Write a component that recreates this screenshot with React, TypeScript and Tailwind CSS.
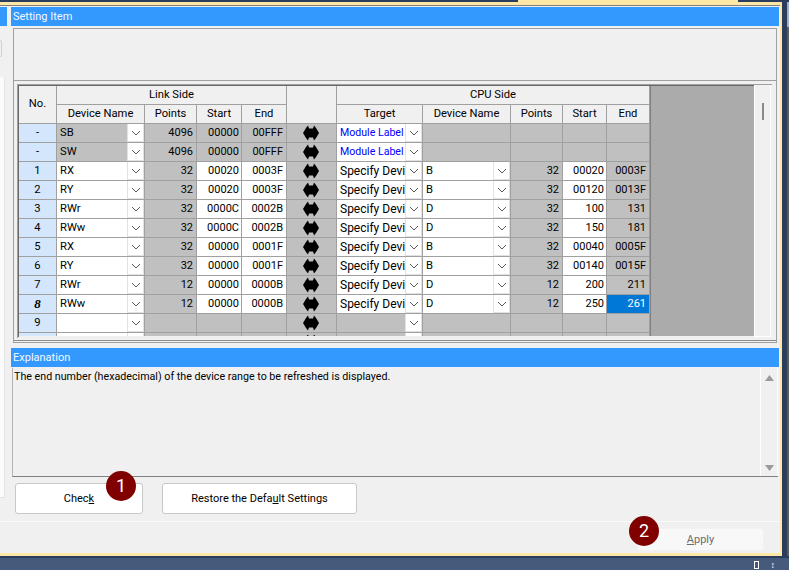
import type { ReactNode } from 'react'

type Row = {
  no: string
  name: string
  points: string
  start: string
  end: string
  target?: string
  device?: string
  cpuPoints?: string
  cpuStart?: string
  cpuEnd?: string
  locked?: boolean
}

const rows: Row[] = [
  { no: '-', name: 'SB', points: '4096', start: '00000', end: '00FFF', target: 'Module Label', locked: true },
  { no: '-', name: 'SW', points: '4096', start: '00000', end: '00FFF', target: 'Module Label', locked: true },
  { no: '1', name: 'RX', points: '32', start: '00020', end: '0003F', target: 'Specify Device', device: 'B', cpuPoints: '32', cpuStart: '00020', cpuEnd: '0003F' },
  { no: '2', name: 'RY', points: '32', start: '00020', end: '0003F', target: 'Specify Device', device: 'B', cpuPoints: '32', cpuStart: '00120', cpuEnd: '0013F' },
  { no: '3', name: 'RWr', points: '32', start: '0000C', end: '0002B', target: 'Specify Device', device: 'D', cpuPoints: '32', cpuStart: '100', cpuEnd: '131' },
  { no: '4', name: 'RWw', points: '32', start: '0000C', end: '0002B', target: 'Specify Device', device: 'D', cpuPoints: '32', cpuStart: '150', cpuEnd: '181' },
  { no: '5', name: 'RX', points: '32', start: '00000', end: '0001F', target: 'Specify Device', device: 'B', cpuPoints: '32', cpuStart: '00040', cpuEnd: '0005F' },
  { no: '6', name: 'RY', points: '32', start: '00000', end: '0001F', target: 'Specify Device', device: 'B', cpuPoints: '32', cpuStart: '00140', cpuEnd: '0015F' },
  { no: '7', name: 'RWr', points: '12', start: '00000', end: '0000B', target: 'Specify Device', device: 'D', cpuPoints: '12', cpuStart: '200', cpuEnd: '211' },
  { no: '8', name: 'RWw', points: '12', start: '00000', end: '0000B', target: 'Specify Device', device: 'D', cpuPoints: '12', cpuStart: '250', cpuEnd: '261' },
  { no: '9', name: '', points: '', start: '', end: '' },
  { no: '', name: '', points: '', start: '', end: '' },
]

const GRAY = 'bg-[#c0c0c0]'
const WHITE = 'bg-white'

function Chevron() {
  return (
    <svg width="10" height="6" viewBox="0 0 10 6" fill="none" stroke="#5a5a5a" strokeWidth="1">
      <path d="M1 1l4 4 4-4" />
    </svg>
  )
}

function Dropdown() {
  return (
    <span className="flex h-[18px] w-[17px] shrink-0 items-center justify-center border border-t-0 border-[#e2e2e2] bg-white">
      <Chevron />
    </span>
  )
}

function Cell(props: { width: string; bg: string; className?: string; children?: ReactNode }) {
  return (
    <div
      className={`flex h-full shrink-0 items-center overflow-hidden whitespace-nowrap border-r border-[#a0a0a0] ${props.width} ${props.bg} ${props.className ?? ''}`}
    >
      {props.children}
    </div>
  )
}

function NumCell(props: { width: string; bg: string; pad: string; value?: string }) {
  return (
    <Cell width={props.width} bg={props.bg} className={`justify-end text-[11px] ${props.pad}`}>
      {props.value}
    </Cell>
  )
}

function SyncArrow() {
  return (
    <svg width="16" height="16" viewBox="0 0 16 16" fill="#000">
      <path d="M0 8l3-5 2-2.500 1 3h4l1-3 2 2.500 3 5-3 5-2 2.500-1-3H6l-1 3-2-2.500z" />
    </svg>
  )
}

function HeadCell(props: { width: string; children: ReactNode }) {
  return (
    <div className={`flex h-full items-center justify-center border-r border-[#a0a0a0] ${props.width}`}>
      {props.children}
    </div>
  )
}

function GridHeader() {
  return (
    <div className="flex h-[38px] w-[631px] border-b border-[#a0a0a0] bg-[#f0f0f0]">
      <div className="flex w-[38px] items-center justify-center border-r border-[#a0a0a0] pb-px">No.</div>
      <div className="flex w-[230px] flex-col">
        <div className="flex h-[19px] items-center justify-center border-b border-r border-[#a0a0a0]">Link Side</div>
        <div className="flex h-[18px]">
          <HeadCell width="w-[88px]">Device Name</HeadCell>
          <HeadCell width="w-[52px]">Points</HeadCell>
          <HeadCell width="w-[45px]">Start</HeadCell>
          <HeadCell width="w-[45px]">End</HeadCell>
        </div>
      </div>
      <div className="w-[50px] border-r border-[#a0a0a0]" />
      <div className="flex w-[313px] flex-col">
        <div className="flex h-[19px] items-center justify-center border-b border-r border-[#a0a0a0]">CPU Side</div>
        <div className="flex h-[18px]">
          <HeadCell width="w-[86px]">Target</HeadCell>
          <HeadCell width="w-[88px]">Device Name</HeadCell>
          <HeadCell width="w-[52px]">Points</HeadCell>
          <HeadCell width="w-[44px]">Start</HeadCell>
          <HeadCell width="w-[43px]">End</HeadCell>
        </div>
      </div>
    </div>
  )
}

function GridRow({ row }: { row: Row }) {
  const active = Boolean(row.device)
  const selected = row.no === '8'
  return (
    <div className="flex h-[19px] w-[631px] shrink-0 border-b border-[#a0a0a0]">
      <Cell width="w-[38px]" bg="bg-[#d4e6fc]" className="justify-center">
        {selected ? <span className="font-['Liberation_Serif',serif] text-[13px] font-bold italic">8</span> : row.no}
      </Cell>
      <Cell width="w-[88px]" bg={row.locked ? GRAY : WHITE}>
        <span className="flex-1 pl-[3px]">{row.name}</span>
        <Dropdown />
      </Cell>
      <NumCell width="w-[52px]" bg={GRAY} pad="pr-[3px]" value={row.points} />
      <NumCell width="w-[45px]" bg={active ? WHITE : GRAY} pad="pr-[2px]" value={row.start} />
      <NumCell width="w-[45px]" bg={active ? WHITE : GRAY} pad="pr-[3px]" value={row.end} />
      <Cell width="w-[50px]" bg={GRAY} className="justify-center pr-px">
        <SyncArrow />
      </Cell>
      <Cell width="w-[86px]" bg={row.target ? WHITE : GRAY}>
        <span
          className={`w-[68px] shrink-0 overflow-hidden pl-[3px] ${row.locked ? 'text-[10.6px] text-[#0000ff]' : 'text-[12px]'}`}
        >
          {row.target}
        </span>
        <Dropdown />
      </Cell>
      <Cell width="w-[88px]" bg={active ? WHITE : GRAY}>
        {active && <span className="flex-1 pl-[3px]">{row.device}</span>}
        {active && <Dropdown />}
      </Cell>
      <NumCell width="w-[52px]" bg={GRAY} pad="pr-[3px]" value={row.cpuPoints} />
      <NumCell width="w-[44px]" bg={active ? WHITE : GRAY} pad="pr-[2px]" value={row.cpuStart} />
      <NumCell
        width="w-[43px]"
        bg={selected ? 'bg-[#0078d7]' : GRAY}
        pad={selected ? 'pr-[3px] text-white' : 'pr-[3px]'}
        value={row.cpuEnd}
      />
    </div>
  )
}

function RefreshGrid() {
  return (
    <div className="ml-[3px] flex h-[254px] w-[755px] border-l border-t border-[#a0a0a0] text-[11.2px]">
      <div className="flex h-[252px] border-l border-t border-[#696969]">
        <div className="flex h-[250px] flex-col overflow-hidden">
          <GridHeader />
          {rows.map((r, i) => (
            <GridRow key={i} row={r} />
          ))}
        </div>
        <div className="h-[250px] w-[104px] border-l border-[#808080] bg-[#ababab]" />
      </div>
      <div className="flex h-[252px] w-[17px] justify-center border-x border-b border-white bg-[#f0f0f0] pt-[18px]">
        <div className="h-[17px] w-[2px] bg-[#8a8a8a]" />
      </div>
    </div>
  )
}

function Badge(props: { children: ReactNode; className: string }) {
  return (
    <span
      className={`absolute flex h-[30px] w-[30px] items-center justify-center rounded-full bg-[#800000] text-[18px] text-white ${props.className}`}
    >
      {props.children}
    </span>
  )
}

function TitleBar(props: { children: ReactNode }) {
  return <div className="flex h-[19px] items-center bg-[#3399ff] pl-[2px] text-[11px] text-[#f4f8ff]">{props.children}</div>
}

function Sidebar() {
  return (
    <div className="flex w-[11px] shrink-0 flex-col">
      <div className="mt-px h-[19px] w-[7px] bg-[#3399ff]" />
      <div className="mt-[14px] h-[17px] w-[2px] rounded-r-sm border border-l-0 border-[#d0d0d0]" />
      <div className="mt-[20px] h-[421px] w-[5px] border-b border-r border-[#e4e4e4] bg-[#fbfbfb]" />
    </div>
  )
}

export default function App() {
  return (
    <div className="flex h-[570px] w-[789px] flex-col overflow-hidden bg-[#2c3c5c] font-[Roboto,sans-serif] text-[12px] leading-[18px] text-black">
      <div className="ml-[518px] h-[2px] w-[220px] shrink-0 bg-[#ffe8a6]" />
      <div className="flex h-[554px] shrink-0">
        <div className="flex w-[782px] shrink-0 flex-col border-b-[3px] border-r-2 border-t-[3px] border-[#ffe8a6] bg-[#f0f0f0]">
          <div className="h-px shrink-0 bg-[#808080]" />
          <div className="flex h-[515px] shrink-0">
            <Sidebar />
            <div className="flex w-[768px] shrink-0 flex-col pt-px">
              <TitleBar>Setting Item</TitleBar>
              <div className="mx-[2px] mt-[2px] h-[315px] w-[764px] border border-[#a0a0a0]">
                <div className="h-[52px] border-b border-[#a0a0a0]" />
                <div className="pt-[3px]">
                  <RefreshGrid />
                </div>
                <div className="mt-[2px] border-b border-[#8c8c8c]" />
              </div>
              <div className="mt-[5px]">
                <TitleBar>Explanation</TitleBar>
              </div>
              <div className="mx-px mt-px flex h-[109px] border-b border-l border-b-[#808080] border-l-[#b4b4b4]">
                <p className="flex-1 pl-px text-[10.7px]">The end number (hexadecimal) of the device range to be refreshed is displayed.</p>
                <div className="flex w-[18px] flex-col items-center justify-between border-x border-white pb-[5px] pt-[7px]">
                  <svg width="9" height="6" viewBox="0 0 9 6" fill="#9a9a9a">
                    <path d="M4.5 0L9 6H0z" />
                  </svg>
                  <svg width="9" height="6" viewBox="0 0 9 6" fill="#9a9a9a">
                    <path d="M0 0h9L4.5 6z" />
                  </svg>
                </div>
              </div>
              <div className="mt-[6px] flex items-start gap-[19px] pl-1">
                <button className="relative h-[31px] w-[128px] rounded-[3px] border border-[#c8c8c8] bg-white text-center text-[11px]">
                  Chec<span className="underline">k</span>
                  <Badge className="left-[90px] top-[-13px]">1</Badge>
                </button>
                <button className="h-[31px] w-[195px] rounded-[3px] border border-[#c8c8c8] bg-white text-center text-[11px]">
                  Restore the Defa<span className="underline">u</span>lt Settings
                </button>
              </div>
            </div>
          </div>
          <div className="h-px shrink-0 bg-[#fbfbfb]" />
          <div className="flex justify-end pr-[16px] pt-[6px]">
            <button className="relative h-[23px] w-[127px] rounded-[3px] border border-[#f2f2f2] bg-[#f8f8f8] text-center text-[11px] text-[#6d6d6d]">
              <span className="underline">A</span>pply
              <Badge className="left-[-9px] top-[-13px]">2</Badge>
            </button>
          </div>
        </div>
        <div className="flex w-[7px] shrink-0 flex-col items-end">
          <div className="h-[25px] w-[2px] bg-[#a3adc4]" />
          <div className="w-[2px] flex-1 bg-[#5c5c5c]" />
        </div>
      </div>
      <div className="mt-[2px] flex flex-1 items-end justify-end gap-[12px] bg-[#465a7c] pr-[14px] text-[9px] leading-[10px] text-white">
        <span className="mb-px h-[8px] w-[5px] border border-white" />
        <span>↕</span>
      </div>
    </div>
  )
}
